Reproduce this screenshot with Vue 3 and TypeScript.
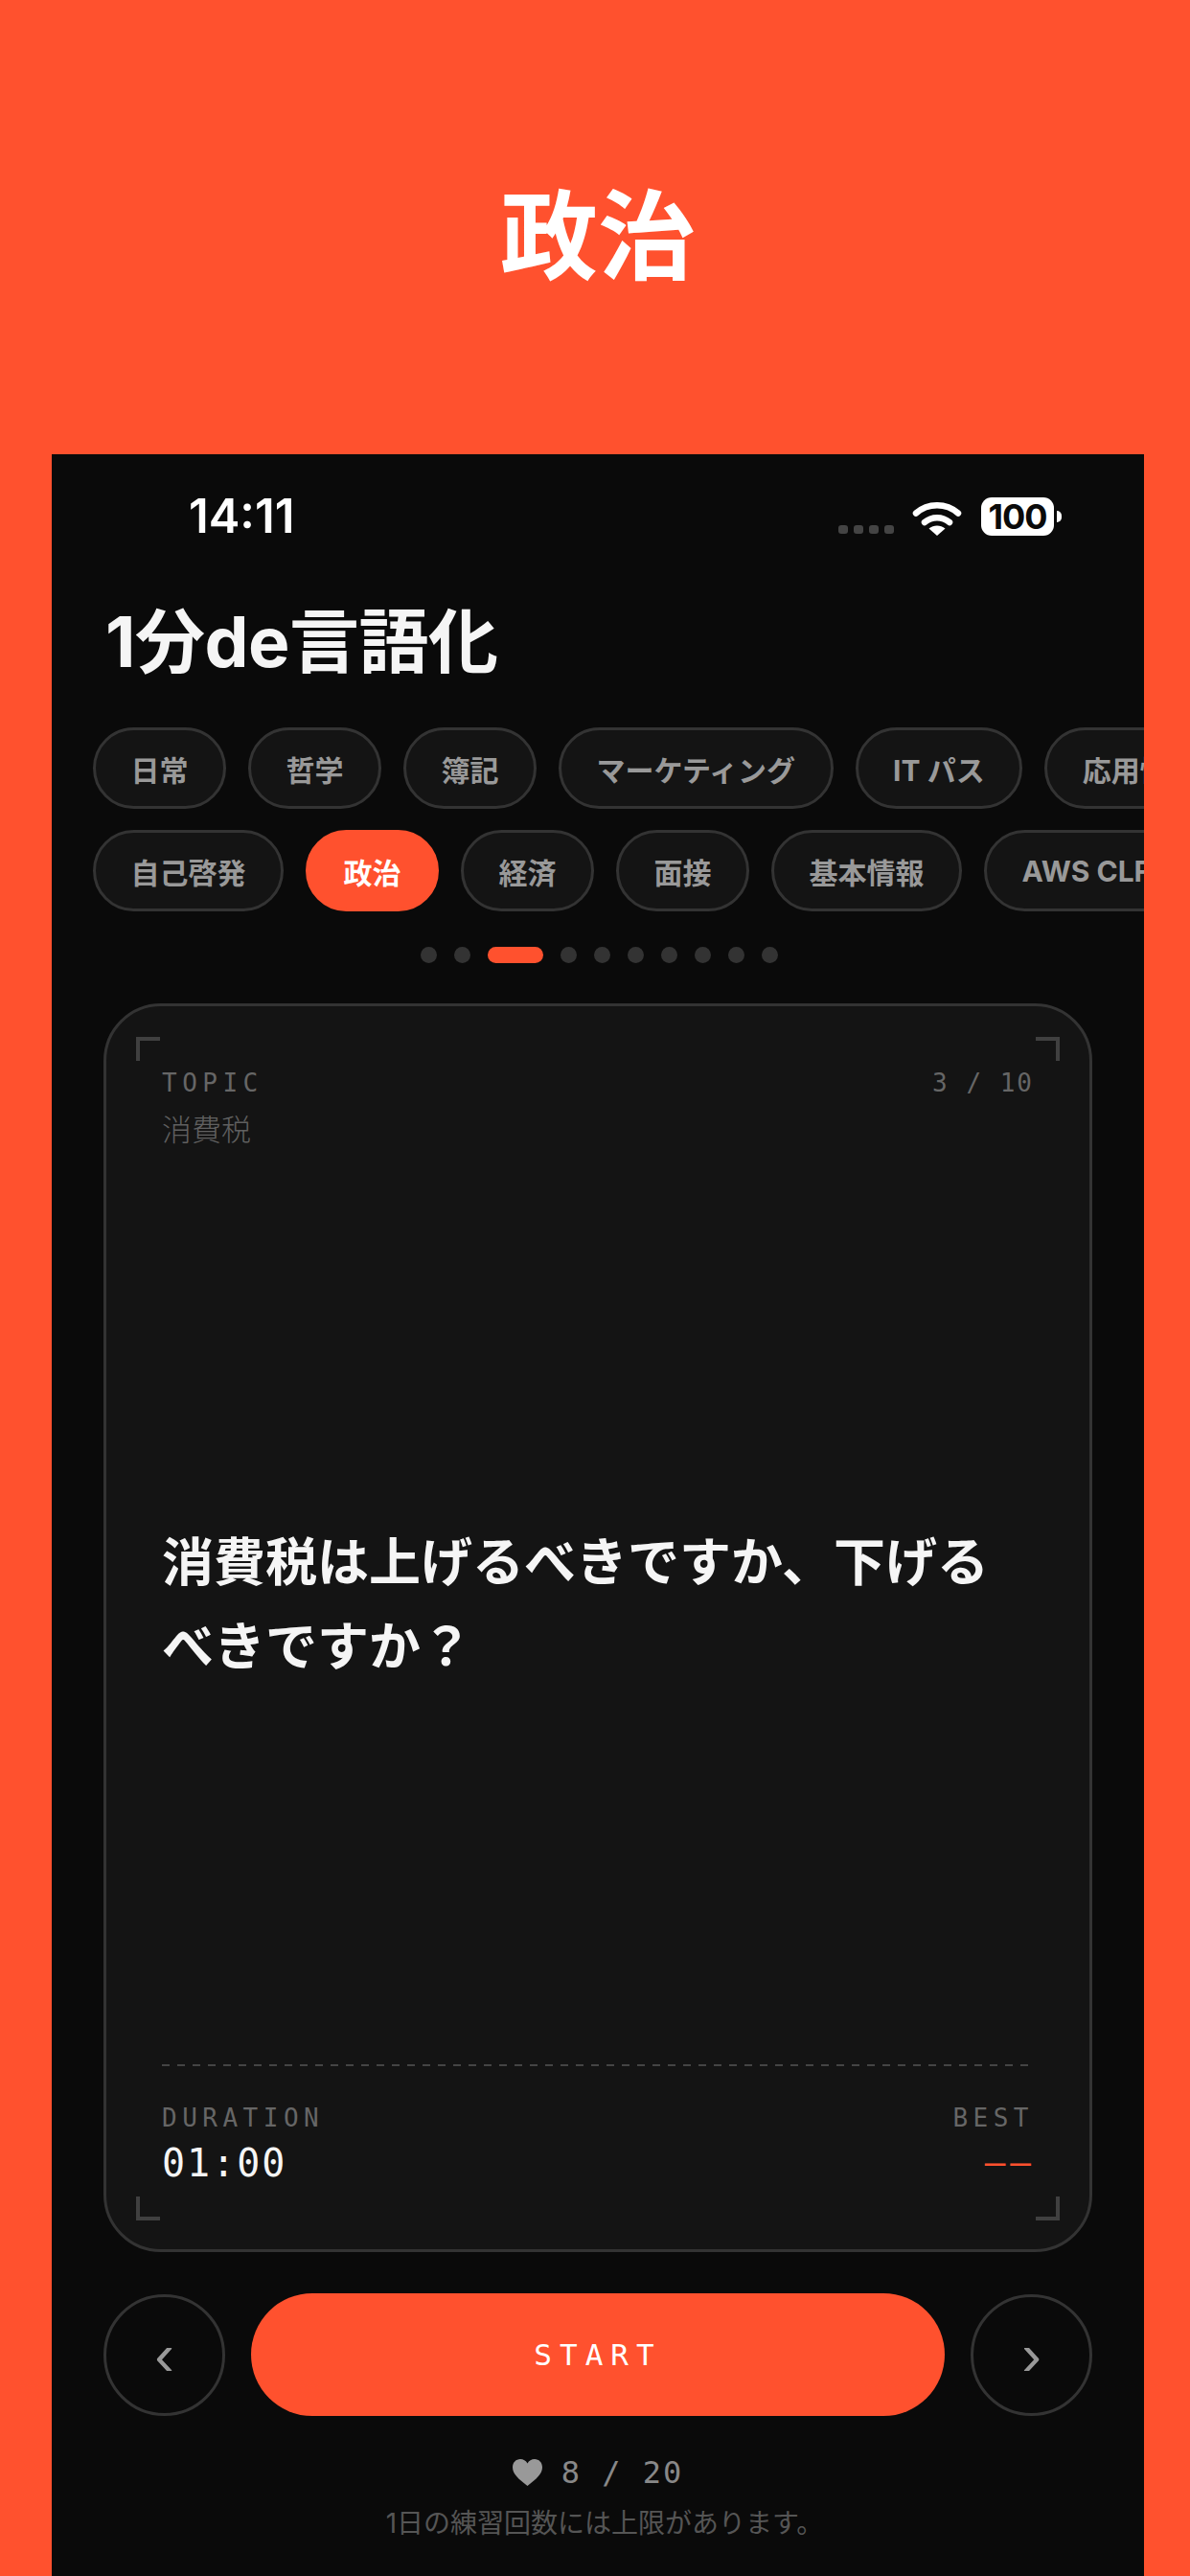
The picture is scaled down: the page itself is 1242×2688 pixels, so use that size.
<script setup lang="ts">
const rowOne: string[] = ['日常', '哲学', '簿記', 'マーケティング', 'IT パス', '応用情報']
const rowTwo: string[] = ['自己啓発', '政治', '経済', '面接', '基本情報', 'AWS CLF']
const activeChip = '政治'
const pageDots: number[] = [0, 1, 2, 3, 4, 5, 6, 7, 8, 9]
const activeDot = 2
</script>

<template>
  <div class="page">
    <header class="hero">
      <h1 class="hero-title">政治</h1>
    </header>

    <main class="screen">
      <div class="status">
        <span class="clock">14:11</span>
        <div class="status-right">
          <div class="signal">
            <i v-for="n in 4" :key="n"></i>
          </div>
          <svg class="wifi" width="52" height="38" viewBox="0 0 52 38">
            <path d="M4 14.5C16.5 3.5 35.5 3.5 48 14.5" fill="none" stroke="#fff" stroke-width="6.5" stroke-linecap="round" />
            <path d="M13 24C20.5 17.5 31.5 17.5 39 24" fill="none" stroke="#fff" stroke-width="6.5" stroke-linecap="round" />
            <path d="M26 38L17.5 30.5C22.5 26.5 29.5 26.5 34.5 30.5Z" fill="#fff" />
          </svg>
          <div class="battery"><span>100</span></div>
          <i class="battery-tip"></i>
        </div>
      </div>

      <h2 class="app-title">1分de言語化</h2>

      <div class="chips">
        <div class="chip-row">
          <span v-for="c in rowOne" :key="c" class="chip">{{ c }}</span>
        </div>
        <div class="chip-row">
          <span v-for="c in rowTwo" :key="c" class="chip" :class="{ active: c === activeChip }">{{ c }}</span>
        </div>
      </div>

      <div class="dots">
        <i v-for="d in pageDots" :key="d" class="dot" :class="{ on: d === activeDot }"></i>
      </div>

      <section class="card">
        <i class="mark tl"></i>
        <i class="mark tr"></i>
        <i class="mark bl"></i>
        <i class="mark br"></i>

        <div class="card-top">
          <div>
            <div class="label">TOPIC</div>
            <div class="topic">消費税</div>
          </div>
          <div class="count">3 / 10</div>
        </div>

        <div class="question">
          <p>消費税は上げるべきですか、下げるべきですか？</p>
        </div>

        <div class="rule"></div>

        <div class="card-bottom">
          <div>
            <div class="label">DURATION</div>
            <div class="time">01:00</div>
          </div>
          <div class="best">
            <div class="label">BEST</div>
            <div class="time accent">––</div>
          </div>
        </div>
      </section>

      <div class="actions">
        <button class="round">‹</button>
        <button class="start">START</button>
        <button class="round">›</button>
      </div>

      <div class="quota">
        <svg width="31" height="28" viewBox="0 0 31 28">
          <path d="M15.5 28C6 20.5 0 15.5 0 8.5 0 3.5 3.6 0 8 0c3.2 0 5.9 1.6 7.5 4.5C17.1 1.6 19.8 0 23 0c4.4 0 8 3.5 8 8.5 0 7-6 12-15.5 19.5Z" fill="#999" />
        </svg>
        <span>8 / 20</span>
      </div>
      <p class="note">1日の練習回数には上限があります。</p>
    </main>
  </div>
</template>

<style>
html,
body {
  margin: 0;
  background: #ff512e;
}
</style>

<style scoped>
.page {
  width: 1242px;
  height: 2688px;
  overflow: hidden;
  display: flex;
  flex-direction: column;
  padding: 0 48px 0 54px;
  box-sizing: border-box;
  background: #ff512e;
  font-family: Inter, 'Noto Sans CJK JP', sans-serif;
}

.hero {
  height: 474px;
  flex: none;
  display: flex;
  justify-content: center;
  padding-top: 180px;
  box-sizing: border-box;
}

.hero-title {
  margin: 0;
  font-size: 102px;
  line-height: 134px;
  font-weight: 700;
  color: #fff;
}

.screen {
  flex: 1;
  min-height: 0;
  overflow: hidden;
  background: #0a0a0a;
}

.status {
  display: flex;
  justify-content: space-between;
  align-items: flex-start;
  padding: 40px 86px 0 143px;
  height: 133px;
  box-sizing: border-box;
}

.clock {
  font-size: 49px;
  line-height: 50px;
  font-weight: 600;
  color: #fff;
}

.status-right {
  display: flex;
  align-items: flex-start;
  margin-top: 5px;
}

.signal {
  display: flex;
  gap: 6px;
  margin-top: 29px;
  margin-right: 19px;
}

.signal i {
  width: 10px;
  height: 9px;
  border-radius: 3px;
  background: #444;
}

.wifi {
  margin-top: 2px;
  margin-right: 20px;
}

.battery {
  width: 76px;
  height: 40px;
  border-radius: 11px;
  background: #fff;
  display: flex;
  align-items: center;
  justify-content: center;
}

.battery span {
  font-size: 36px;
  line-height: 40px;
  font-weight: 700;
  color: #0a0a0a;
  letter-spacing: -1px;
}

.battery-tip {
  width: 5px;
  height: 12px;
  margin: 14px 0 0 3px;
  border-radius: 0 6px 6px 0;
  background: #fff;
}

.app-title {
  margin: 0;
  padding: 11px 0 0 56px;
  box-sizing: border-box;
  height: 152px;
  font-size: 73px;
  line-height: 104px;
  font-weight: 700;
  color: #f5f5f5;
  letter-spacing: -0.5px;
}

.chips {
  display: flex;
  flex-direction: column;
  gap: 22px;
}

.chip-row {
  display: flex;
  gap: 23px;
  padding-left: 43px;
}

.chip {
  flex: none;
  height: 85px;
  box-sizing: border-box;
  padding: 0 36.5px;
  display: flex;
  align-items: center;
  border: 3px solid #333;
  border-radius: 43px;
  background: #141414;
  font-size: 30px;
  font-weight: 700;
  color: #999;
  white-space: nowrap;
}

.chip.active {
  background: #ff512e;
  border-color: #ff512e;
  color: #fff;
}

.dots {
  display: flex;
  justify-content: center;
  align-items: center;
  gap: 18px;
  margin-top: 37px;
  padding-left: 2px;
}

.dot {
  width: 17px;
  height: 17px;
  border-radius: 50%;
  background: #333;
}

.dot.on {
  width: 58px;
  border-radius: 9px;
  background: #ff512e;
}

.card {
  position: relative;
  margin: 42px 54px 0;
  height: 1303px;
  box-sizing: border-box;
  padding: 64px 58px 0;
  display: flex;
  flex-direction: column;
  border: 3px solid #333;
  border-radius: 60px;
  background: #141414;
  font-family: 'DejaVu Sans Mono', 'Noto Sans CJK JP', monospace;
}

.mark {
  position: absolute;
  width: 21px;
  height: 21px;
  border: 0 solid #404040;
}

.tl {
  top: 32px;
  left: 31px;
  border-width: 4px 0 0 4px;
}

.tr {
  top: 32px;
  right: 31px;
  border-width: 4px 4px 0 0;
}

.bl {
  bottom: 30px;
  left: 31px;
  border-width: 0 0 4px 4px;
}

.br {
  bottom: 30px;
  right: 31px;
  border-width: 0 4px 4px 0;
}

.card-top,
.card-bottom {
  display: flex;
  justify-content: space-between;
}

.label {
  font-size: 26px;
  line-height: 32px;
  letter-spacing: 5.5px;
  color: #666;
}

.topic {
  margin-top: 10px;
  font-size: 31px;
  line-height: 46px;
  font-weight: 300;
  color: #606060;
}

.count {
  font-size: 26px;
  line-height: 32px;
  letter-spacing: 2px;
  color: #666;
}

.question {
  flex: 1;
  display: flex;
  align-items: center;
  padding-bottom: 6px;
}

.question p {
  margin: 0;
  font-family: Inter, 'Noto Sans CJK JP', sans-serif;
  font-size: 54px;
  line-height: 88px;
  font-weight: 700;
  color: #f5f5f5;
}

.rule {
  height: 2px;
  margin-right: 2px;
  background: repeating-linear-gradient(90deg, #444 0 8px, transparent 8px 16px);
}

.card-bottom {
  margin-top: 38px;
  height: 153px;
}

.best {
  text-align: right;
}

.time {
  margin-top: 6px;
  font-size: 40px;
  line-height: 50px;
  letter-spacing: 2px;
  color: #f5f5f5;
}

.accent {
  color: #ff512e;
  font-size: 36px;
  letter-spacing: 5px;
  margin-right: -2px;
}

.actions {
  display: flex;
  align-items: center;
  gap: 27px;
  margin: 43px 54px 0;
}

.round {
  flex: none;
  width: 127px;
  height: 127px;
  padding: 0;
  border: 3px solid #333;
  border-radius: 50%;
  background: transparent;
  font-family: 'Liberation Sans', sans-serif;
  font-size: 62px;
  line-height: 1;
  color: #999;
}

.start {
  flex: 1;
  height: 128px;
  padding: 0;
  border: 0;
  border-radius: 64px;
  background: #ff512e;
  font-family: 'DejaVu Sans Mono', monospace;
  font-size: 31px;
  letter-spacing: 8px;
  color: #fff;
}

.quota {
  display: flex;
  justify-content: center;
  align-items: center;
  gap: 20px;
  margin-top: 39px;
  font-family: 'DejaVu Sans Mono', monospace;
  font-size: 32px;
  line-height: 40px;
  letter-spacing: 2px;
  color: #888;
}

.note {
  margin: 13px 0 0;
  padding-left: 14px;
  text-align: center;
  font-size: 28px;
  line-height: 40px;
  color: #555;
}
</style>
